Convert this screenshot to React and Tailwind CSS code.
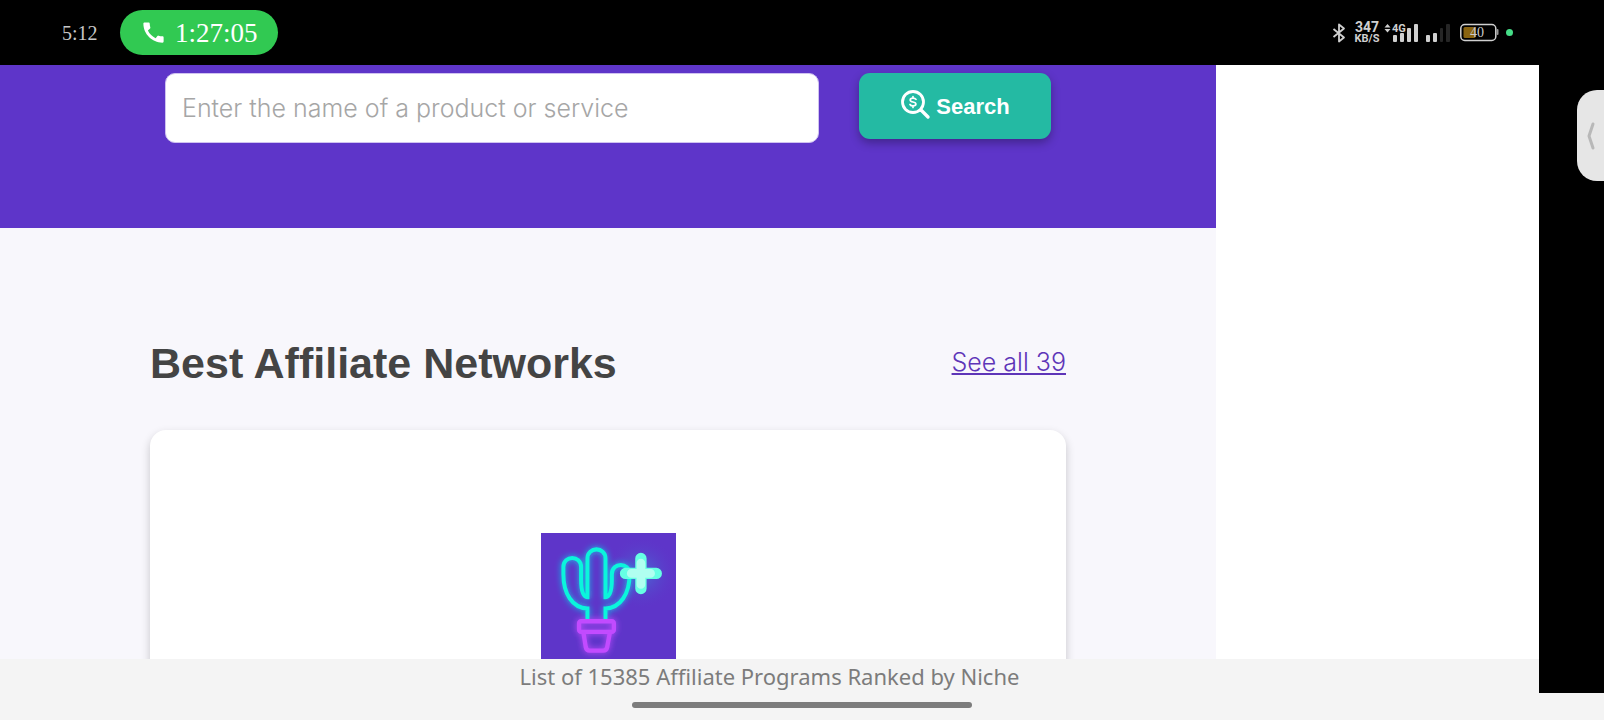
function BluetoothIcon() {
  return (
    <svg className="h-5 w-3.5" viewBox="0 0 14 20" fill="none" stroke="#d0d0d0" strokeWidth="1.8" strokeLinejoin="round">
      <path d="M1.5 6L12 14.5L7 18.5V1.5L12 5.5L1.5 14" />
    </svg>
  );
}

function SignalFull() {
  return (
    <svg className="h-5 w-9" viewBox="0 0 36 20" fill="#d0d0d0">
      <path d="M0.5 4.5L3.5 1L6.5 4.5ZM0.5 6L3.5 9.5L6.5 6Z" />
      <rect x="9" y="12" width="4" height="7" rx="1" />
      <rect x="16" y="10" width="4" height="9" rx="1" />
      <rect x="23" y="5" width="4" height="14" rx="1" />
      <rect x="30" y="1" width="4" height="18" rx="1" />
      <text x="8" y="9" fontSize="11" fontWeight="700" fontFamily="Roboto, sans-serif" stroke="black" strokeWidth="1.5" paintOrder="stroke">
        4G
      </text>
    </svg>
  );
}

function SignalWeak() {
  return (
    <svg className="h-5 w-6" viewBox="0 0 24 20" fill="#d0d0d0">
      <rect x="0" y="12" width="4" height="7" rx="1" />
      <rect x="7" y="10" width="4" height="9" rx="1" />
      <rect x="14" y="5" width="3" height="14" rx="1" fill="#262626" />
      <rect x="20" y="1" width="4" height="18" rx="1" fill="#262626" />
    </svg>
  );
}

function Battery() {
  return (
    <svg className="h-5 w-[39px]" viewBox="0 0 39 20">
      <rect x="0.8" y="1.5" width="35" height="16" rx="4" fill="none" stroke="#d0d0d0" strokeWidth="1.5" />
      <rect x="3.5" y="4" width="12" height="11" rx="1.5" fill="#8a6410" />
      <rect x="36.5" y="6" width="2" height="6" rx="1" fill="#9a9a9a" />
      <text x="10" y="14" fontSize="14" fill="#cccccc" fontFamily="Liberation Serif, serif">
        40
      </text>
    </svg>
  );
}

function StatusBar() {
  return (
    <header className="flex h-[65px] shrink-0 items-center bg-black pr-[91px] pl-[62px] text-white">
      <span className="w-9 font-['Liberation_Serif',serif] text-xl text-[#c8c8c8]">5:12</span>
      <div className="ml-[22px] flex h-[45px] w-[158px] items-center gap-2 rounded-full bg-[#31c952] pl-5">
        <svg className="size-[27px]" viewBox="0 0 24 24" fill="white">
          <path d="M20.01 15.38c-1.23 0-2.42-.2-3.53-.56a.98.98 0 0 0-1.01.24l-1.57 1.97c-2.83-1.35-5.48-3.9-6.89-6.83l1.95-1.66c.27-.28.35-.67.24-1.02-.37-1.11-.56-2.3-.56-3.53 0-.54-.45-.99-.99-.99H4.19C3.65 3 3 3.24 3 3.99 3 13.28 10.73 21 20.01 21c.71 0 .99-.63.99-1.18v-3.45c0-.54-.45-.99-.99-.99z" />
        </svg>
        <span className="pt-0.5 font-['Liberation_Serif',serif] text-[27px]">1:27:05</span>
      </div>
      <div className="ml-auto flex items-center text-[#d0d0d0]">
        <BluetoothIcon />
        <div className="ml-2 flex w-[26px] flex-col items-center font-['Roboto',sans-serif] font-bold">
          <span className="text-sm leading-3">347</span>
          <span className="text-[11px] leading-[11px]">KB/S</span>
        </div>
        <div className="ml-1">
          <SignalFull />
        </div>
        <div className="ml-1.5">
          <SignalWeak />
        </div>
        <div className="ml-2.5">
          <Battery />
        </div>
        <span className="ml-[7px] size-[7px] rounded-full bg-[#45dd87]" />
      </div>
    </header>
  );
}

function SearchIcon() {
  return (
    <svg className="size-[30px] overflow-visible" viewBox="0 0 30 30" fill="none" stroke="white" strokeLinecap="round">
      <circle cx="13" cy="11" r="10.5" strokeWidth="2.8" />
      <path d="M21 19L28 26" strokeWidth="3.4" />
      <path
        d="M16 8.4C15.4 7.5 14.4 7.1 13 7.1C11.3 7.1 10.2 7.8 10.2 9C10.2 10.3 11.4 10.7 13 11C14.7 11.3 15.9 11.8 15.9 13.1C15.9 14.3 14.7 14.9 13 14.9C11.5 14.9 10.5 14.4 10 13.5M13 5.6V7M13 15V16.4"
        strokeWidth="1.7"
      />
    </svg>
  );
}

function SearchBanner() {
  return (
    <section className="flex h-[163px] items-start bg-[#5e35c9] px-[165px] pt-2">
      <form className="flex flex-1 items-start gap-10" onSubmit={(e) => e.preventDefault()}>
        <input
          type="text"
          aria-label="Product or service"
          placeholder="Enter the name of a product or service"
          className="h-[70px] min-w-0 flex-1 rounded-[10px] border border-[#cfc2f0] bg-white px-4 font-['Inter',sans-serif] text-[25px] font-light text-[#444] placeholder:text-[#a6a6a6]"
        />
        <button
          type="submit"
          className="flex h-[66px] w-48 items-center justify-center gap-1.5 rounded-[11px] bg-[#24baa3] text-[22px] font-bold text-white shadow-[0_4px_10px_rgba(0,0,0,0.3)]"
        >
          <SearchIcon />
          Search
        </button>
      </form>
    </section>
  );
}

function CactusLogo() {
  return (
    <svg className="size-[135px]" viewBox="64 40 404 404" fill="none" role="img" aria-label="Cactus logo">
      <defs>
        <filter id="glow" x="-50%" y="-50%" width="200%" height="200%">
          <feGaussianBlur stdDeviation="9" />
        </filter>
        <radialGradient id="halo">
          <stop offset="0" stopColor="#3f7fd8" stopOpacity="0.8" />
          <stop offset="1" stopColor="#5e35c9" stopOpacity="0" />
        </radialGradient>
        <g id="cactus" strokeWidth="12">
          <path d="M203 298V266C158 264 131 222 131 164V142C131 106 184 106 184 142V180C184 214 190 231 203 232V116C203 80 257 80 257 116V232C270 231 276 214 276 180V164C276 126 329 126 329 164C329 222 302 264 257 266V298" />
        </g>
        <g id="pot" strokeWidth="13" strokeLinejoin="round">
          <rect x="178" y="304" width="104" height="32" rx="6" />
          <path d="M191 338L198 382Q200 392 210 392H250Q260 392 262 382L270 338" />
        </g>
      </defs>
      <rect x="64" y="40" width="404" height="404" fill="#5e35c9" />
      <circle cx="363" cy="160" r="110" fill="url(#halo)" />
      <use href="#cactus" stroke="#16c8e8" filter="url(#glow)" />
      <use href="#pot" stroke="#c24bff" filter="url(#glow)" />
      <use href="#cactus" stroke="#0bf5dc" />
      <use href="#pot" stroke="#c24bff" />
      <path d="M363 116V206M317 161H409" stroke="#66ffe4" strokeWidth="34" strokeLinecap="round" />
      <path d="M363 130V194M334 161H392" stroke="#b0fff0" strokeWidth="26" strokeLinecap="round" />
    </svg>
  );
}

function Networks() {
  return (
    <section className="px-[150px] pt-[107px]">
      <div className="flex items-center justify-between">
        <h2 className="text-[43px] leading-[56px] font-bold text-[#444]">Best Affiliate Networks</h2>
        <a
          href="#networks"
          className="font-['Inter',sans-serif] text-[25px] font-light text-[#5e35b8] underline decoration-2 underline-offset-2"
        >
          See all 39
        </a>
      </div>
      <article className="mt-[39px] flex h-[400px] justify-center rounded-2xl bg-white pt-[103px] shadow-[0_4px_10px_rgba(0,0,0,0.2)]">
        <CactusLogo />
      </article>
    </section>
  );
}

export default function App() {
  return (
    <div className="relative flex h-screen flex-col overflow-hidden bg-[#f4f4f4] font-['Liberation_Sans',sans-serif]">
      <StatusBar />
      <div className="flex min-h-0 flex-1">
        <div className="flex min-w-0 flex-1 flex-col">
          <main className="min-h-0 flex-1 overflow-hidden bg-white pr-[323px]">
            <div className="min-h-full bg-[#f8f7fc]">
              <SearchBanner />
              <Networks />
            </div>
          </main>
          <footer className="h-[61px] shrink-0 text-center font-['Noto_Sans',sans-serif] text-[22px] leading-[34px] text-[#7c7c7c]">
            List of 15385 Affiliate Programs Ranked by Niche
          </footer>
        </div>

        {/* Edge strip with the side panel handle */}
        <aside className="mb-[27px] flex w-[65px] items-start justify-end bg-black pt-[25px]">
          <button
            type="button"
            aria-label="Open side panel"
            className="flex h-[91px] w-[27px] items-center justify-center rounded-l-[20px] bg-[#e6e6e6]"
          >
            <svg className="h-7 w-2" viewBox="0 0 8 28" fill="none" stroke="#b8b8b8" strokeWidth="3" strokeLinecap="round" strokeLinejoin="round">
              <path d="M6 2L2 14L6 26" />
            </svg>
          </button>
        </aside>
      </div>
      <div className="absolute bottom-3 left-1/2 h-1.5 w-[340px] -translate-x-1/2 rounded-full bg-[#7c7c7c]" />
    </div>
  );
}
